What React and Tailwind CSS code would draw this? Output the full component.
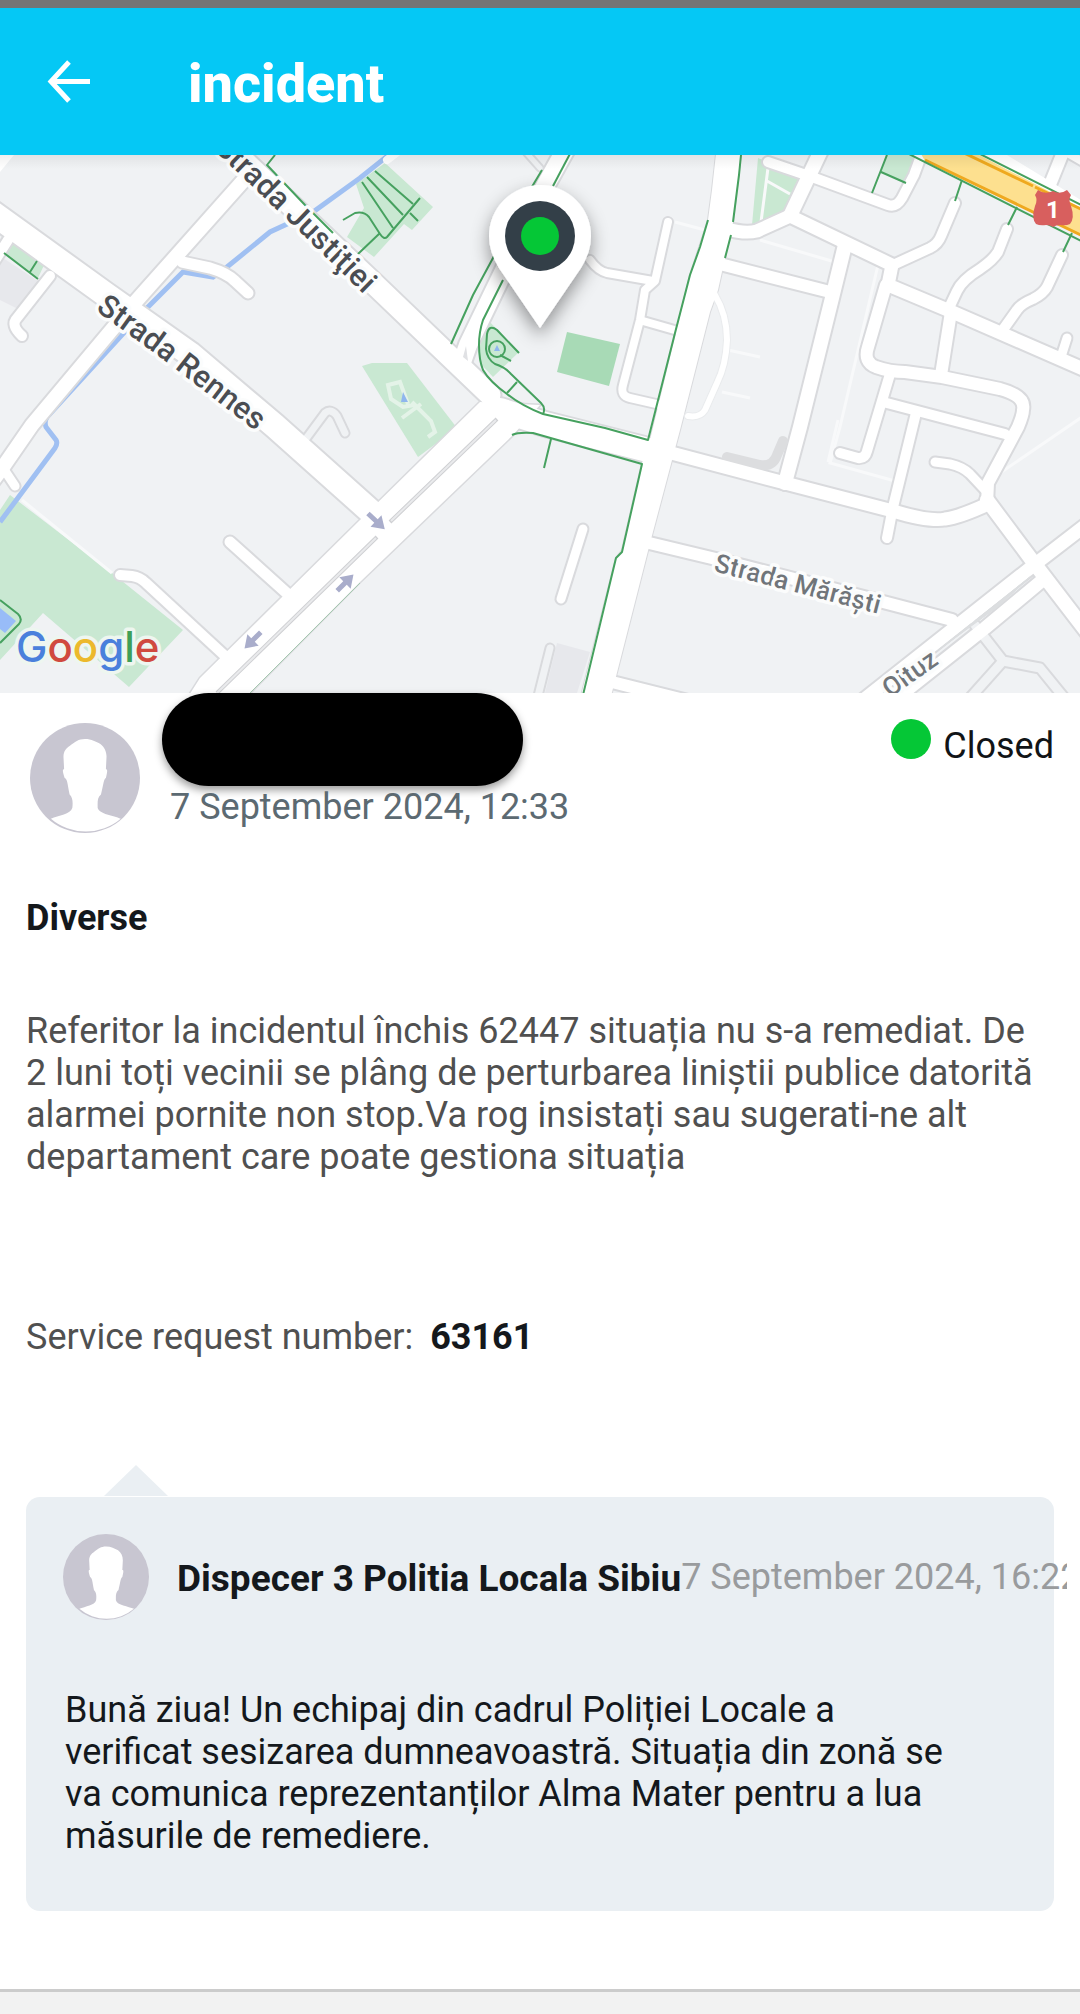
import React from "react";

// street geometry, in map units: [width, path]
const STREETS = [
  [24, "M-10 211L105 294L190 354L275 426L378 518"],
  [21, "M225 143L370 280L490 395"],
  [14, "M243 181L130 308L32 425L3 467L-8 482"],
  [9, "M3 468L15 486"],
  [11, "M182 262L210 268Q227 273 235 281L248 293"],
  [10, "M50 276L17 318Q10 325 22 336"],
  [10, "M8 240L-6 262"],
  [18, "M568 145L543 190L468 345L462 362"],
  [8, "M590 260Q598 271 607 273L653 281"],
  [8, "M668 222L655 281L645 290L640 320L623 385Q620 396 630 398L665 406"],
  [8, "M643 321L685 333"],
  [10, "M120 575L132 576Q140 577 146 583L224 655"],
  [11, "M230 542L290 596"],
  [9, "M583 529L561 599"],
  [24, "M500 410L545 424L660 453"],
  [13, "M660 450L785 483L893 511Q930 522 945 519Q960 517 988 504"],
  [12, "M645 542L720 560L887 603L952 620"],
  [12, "M612 682L700 704"],
  [13, "M862 701L1034 565L1095 518"],
  [13, "M898 697L985 628L1045 578"],
  [14, "M987 500L1034 563L1090 636"],
  [10, "M768 162L812 177L888 205Q896 208 902 198L914 175L925 145"],
  [14, "M826 140L790 216"],
  [13, "M727 229Q745 234 757 231L790 216L892 265L888 285L950 311L1090 372"],
  [10, "M955 203L941 236Q938 244 930 248L893 265"],
  [10, "M1007 229L998 252Q993 260 980 269Q962 280 957 291L949 308"],
  [10, "M1062 255L1047 287Q1043 294 1033 299Q1021 304 1017 310L1002 331"],
  [9, "M1067 338L1060 360"],
  [14, "M845 245L832 298L800 427L785 483"],
  [12, "M720 264L830 292"],
  [12, "M886 285L868 347Q863 362 876 367Q890 372 905 372L942 377L1000 389Q1026 396 1023 410Q1023 415 1018 427L988 483L987 504"],
  [12, "M951 312L941 375"],
  [10, "M890 374L867 451Q865 459 858 458L840 453"],
  [10, "M883 402L1005 434"],
  [10, "M916 413L893 507L887 538"],
  [9, "M935 462L950 464Q963 467 970 474L985 490"],
  [12, "M1066 145L1047 192"],
  [8, "M1066 152L1090 166"],
];

const ALLEYS = [
  [7, "M305 440L325 413Q331 408 337 416L345 433"],
  [7, "M550 648L537 700"],
  [9, "M975 625L1003 661L1040 668L1066 700"],
  [9, "M1003 661L970 698"],
  [5, "M524 150L540 168"],
];

const AVENUE = "M186 700L200 678L360 520L480 402L540 405L513 435L360 582L243 700Z";
const BOULEVARD =
  "M717 145L712 190L708 220L690 275L650 440L642 463L622 550L616 558L580 700L610 700L650 543L680 430L710 312L718 290L725 258L733 222L742 145Z";

const PARKS = [
  "M12 243L45 263L38 278L3 253Z",
  "M10 495L112 573L183 630L129 687L43 613L0 660V510Z",
  "M385 163L433 207L412 230L404 224L374 257L347 237L364 208L356 184Z",
  "M362 366L372 363H407L457 428L418 457Z",
  "M485 317L519 352L493 377L480 363L478 337Z",
  "M758 158L803 177L788 213L752 225Z",
  "M887 150H922L906 183L881 172Z",
];

const FOOTPATHS = [
  "M275 155L267 165L305 205L333 233",
  "M4 253L38 279M37 261L30 272",
  "M375 171L413 204M367 177L403 215M362 182L393 228M420 198L387 237Q384 240 380 234L369 217Q364 211 355 213L343 220M410 213L418 221M380 233L358 254",
  "M542 170L533 185L493 258L473 295L451 344",
  "M572 150L553 186",
  "M503 280L483 320Q479 332 479 345Q479 360 483 370Q490 382 507 394Q522 406 543 414L605 428L648 440L675 333L690 275L700 247L708 220",
  "M519 353L497 330Q489 324 487 334L486 349Q487 359 495 364Q505 367 511 374L541 403Q546 408 543 414M517 382L507 393M500 355L511 361",
  "M512 435Q518 432 533 433L642 464L622 552L616 558L583 695M551 439L544 468",
  "M741 155L739 175L733 222M731 235L725 258",
  "M907 153L1085 243M978 153L1085 207",
  "M962 180L955 201M1017 207L1008 225M1072 233L1063 252M887 155L872 193M881 172L906 183",
  "M0 600L18 614Q23 619 19 624L0 643",
];

const haloProps = {
  stroke: "#fbfcfc",
  strokeWidth: 7,
  strokeLinejoin: "round",
  paintOrder: "stroke",
};

const MapArrow = ({ x, y, angle }) => (
  <path
    d="M-11 -2.5H0V-8L12 0L0 8V2.5H-11Z"
    fill="#a9adcb"
    transform={`translate(${x} ${y}) rotate(${angle})`}
  />
);

const GoogleMark = () => (
  <text
    x="16"
    y="662"
    fontSize="42"
    fontFamily="Inter, sans-serif"
    fontWeight="500"
    strokeWidth="7"
    stroke="#eef6f0"
    strokeLinejoin="round"
    paintOrder="stroke"
  >
    <tspan fill="#4a80dc">G</tspan>
    <tspan fill="#d04a3f">o</tspan>
    <tspan fill="#ecb92c">o</tspan>
    <tspan fill="#4a80dc">g</tspan>
    <tspan fill="#3f9f58">l</tspan>
    <tspan fill="#d04a3f">e</tspan>
  </text>
);

const IncidentMap = () => (
  <svg
    viewBox="0 155 1080 538"
    className="block w-full h-auto"
    role="img"
    aria-label="Map"
    fontFamily="Roboto, sans-serif"
    fontWeight="500"
  >
    <defs>
      <path id="rennes" d="M95 310L160 357L275 446" />
      <path id="justitiei" d="M213 149L300 232L400 330" />
      <path id="marasti" d="M713 571L910 622" />
      <path id="oituz" d="M890 698L960 649" />
      <linearGradient id="barShadow" x1="0" y1="0" x2="0" y2="1">
        <stop offset="0" stopColor="#000" stopOpacity="0.06" />
        <stop offset="1" stopColor="#000" stopOpacity="0" />
      </linearGradient>
      <filter id="pinShadow" x="-50%" y="-30%" width="200%" height="170%">
        <feDropShadow dx="0" dy="8" stdDeviation="9" floodOpacity="0.4" />
      </filter>
    </defs>

    <rect y="155" width="1080" height="538" fill="#f0f2f4" />
    <path d="M0 256L38 281L20 310L0 300ZM557 643L590 652L577 693H545Z" fill="#e7e8ec" />
    {PARKS.map((d) => (
      <path key={d} d={d} fill="#c9e8d2" />
    ))}
    <path d="M567 332L620 344L609 386L557 372Z" fill="#a8dab6" />
    <path d="M0 608L16 621L5 633L0 629Z" fill="#98bcf8" />

    {/* faint lanes */}
    <g fill="none" stroke="#f8f9fa" strokeWidth="3">
      <path d="M878 265L840 427L830 463L895 481M760 240L835 262M675 222L705 230M768 168L761 222M767 181L790 194" />
      <path d="M1085 415L1000 473M728 350L760 357M722 392L750 398M22 500L112 573M838 420L828 462" />
      <path
        d="M408 404L400 382L388 385L391 399L403 407L414 405M402 418L421 404M412 402L431 421L435 432L428 437"
        stroke="#e4f3e8"
        strokeWidth="4"
      />
    </g>

    <path
      d="M395 150L360 178L313 212L270 232L227 267L213 277L183 272L142 313L120 337L47 417Q44 422 46 427L56 440Q58 443 55 448L0 522"
      fill="none"
      stroke="#a0c0f2"
      strokeWidth="5"
    />

    {/* casings first, so that crossings stay open */}
    <g fill="none" stroke="#d9dadd" strokeLinecap="round" strokeLinejoin="round">
      {[...ALLEYS, ...STREETS].map(([w, d]) => (
        <path key={d} d={d} strokeWidth={w + 4} />
      ))}
      <path d={AVENUE} strokeWidth="3" />
      <path d={BOULEVARD} strokeWidth="2" />
      <path d="M715 295Q727 315 727 340Q726 365 717 383L705 410Q700 418 688 416" strokeWidth="8" stroke="#e9ebed" />
    </g>
    <g fill="none" stroke="#fff" strokeLinecap="round" strokeLinejoin="round">
      {ALLEYS.map(([w, d]) => (
        <path key={d} d={d} strokeWidth={w} stroke="#f0f2f4" />
      ))}
      <path d="M727 457L760 465Q773 467 777 455L783 441" stroke="#dcdddf" strokeWidth="10" />
      {STREETS.map(([w, d]) => (
        <path key={d} d={d} strokeWidth={w} />
      ))}
      <path d="M715 295Q727 315 727 340Q726 365 717 383L705 410Q700 418 688 416" strokeWidth="6" />
      <path d="M387 160L400 150" strokeWidth="8" />
    </g>
    <path d={AVENUE} fill="#fff" />
    <path d={BOULEVARD} fill="#fff" />
    <path d="M0 150H18L0 172Z" fill="#fff" />
    <path d="M217 693L377 537M390 522L497 419" fill="none" stroke="#cfd0d3" strokeWidth="4" />
    <path d="M217 693L376 538M391 521L496 420" fill="none" stroke="#e9eaec" strokeWidth="2" />
    <path d="M250 693L360 583" fill="none" stroke="#a5c9b0" strokeWidth="1" />
    <path d="M463 357L466 346L468 361Z" fill="#e0e1e4" />
    <path d="M937 651L1000 605L1031 576L1001 600Z" fill="#dcdee0" stroke="#dcdee0" strokeWidth="1" />

    {/* national road */}
    <path d="M900 140L1090 231V215L975 145Z" fill="none" stroke="#fff" strokeWidth="16" />
    <path d="M916 145L925 161L1085 238V210L960 145Z" fill="#fde08f" />
    <path d="M925 160L1085 237M960 151L1033 186M1035 187L1085 211" fill="none" stroke="#efa91f" strokeWidth="3" />

    <g fill="none" stroke="#46a15f" strokeWidth="2" strokeLinejoin="round">
      {FOOTPATHS.map((d) => (
        <path key={d} d={d} />
      ))}
      <circle cx="497" cy="349" r="8" />
    </g>
    <path d="M497 345L500 351H494ZM403 392L408 402H401Z" fill="#8fb6ee" />

    <MapArrow x={253} y={640} angle={135} />
    <MapArrow x={345} y={583} angle={-45} />
    <MapArrow x={376} y={521} angle={43} />

    <g fill="#4a4d52" fontSize="31" {...haloProps}>
      <text>
        <textPath href="#rennes">Strada Rennes</textPath>
      </text>
      <text>
        <textPath href="#justitiei">Strada Justiţiei</textPath>
      </text>
    </g>
    <g fill="#70757a" fontSize="26" {...haloProps}>
      <text>
        <textPath href="#marasti">Strada Mărăști</textPath>
      </text>
      <text>
        <textPath href="#oituz">Oituz</textPath>
      </text>
    </g>

    <path
      d="M1038 190Q1045 195 1053 191Q1060 195 1067 190L1071 195Q1068 200 1071 206Q1075 218 1070 224Q1066 226 1060 225Q1056 225 1053 227Q1050 225 1046 225Q1040 226 1036 224Q1031 218 1035 206Q1038 200 1035 195Z"
      fill="#d85f5e"
    />
    <text x="1053" y="218" fontSize="24" fontWeight="700" fill="#fff" textAnchor="middle">
      1
    </text>

    <GoogleMark />
    <rect y="155" width="1080" height="14" fill="url(#barShadow)" />

    <path
      d="M540 328L499 268Q489 252 489 236A51 51 0 0 1 591 236Q591 252 581 268Z"
      fill="#fff"
      filter="url(#pinShadow)"
    />
    <circle cx="540" cy="236" r="35" fill="#333f48" />
    <circle cx="540" cy="236" r="19" fill="#05c736" />
  </svg>
);

const Avatar = ({ className }) => (
  <svg viewBox="0 0 100 100" className={className} aria-hidden="true">
    <circle cx="50" cy="50" r="50" fill="#c8c6d1" />
    <path
      d="M50 14.500C56 14.500 60 17 64 19C68 22 70 27 69.500 32L69 42C71 42 70 45 69 50C67 51 67 55 64.500 65C61 68 61.500 72 61.500 77C63 83 76 84 82.500 87A49 49 0 0 1 19 87C26 84 37 83 38.500 77C39 72 39 68 36 65C34 55 34 51 31.500 50C30 45 29 42 31 42L30.500 32C30 26 33 23 36 21C41 17 44 14.500 50 14.500Z"
      fill="#fff"
    />
  </svg>
);

const Header = ({ title }) => (
  <header className="flex items-center h-[147px] pl-11 bg-[#05c8f5] text-white">
    <button type="button" aria-label="Back" className="flex items-center justify-center w-12 h-12">
      <svg viewBox="0 0 48 48" className="w-12 h-12" fill="none" stroke="currentColor" strokeWidth="5">
        <path d="M25 4L7 23.500L25 43M6 23.500H46" />
      </svg>
    </button>
    <h1 className="ml-24 pt-1 text-[54px] leading-[64px] font-extrabold">{title}</h1>
  </header>
);

const Reply = ({ author, date, text }) => (
  <section className="mt-[107px]">
    <div className="ml-[78px] mb-px w-16 h-[31px] bg-[#eaeff3] [clip-path:polygon(50%_0,100%_100%,0_100%)]" />
    <article className="pt-[37px] pb-[54px] rounded-[14px] bg-[#eaeff3] text-[#14181c]">
      {/* the date runs past the card edge before it is cut off */}
      <div className="flex items-center -mr-[13px] pl-[37px] overflow-hidden whitespace-nowrap">
        <Avatar className="w-[86px] h-[86px] shrink-0" />
        <h2 className="ml-7 pt-1 shrink-0 text-[37px] font-bold">{author}</h2>
        <time className="shrink-0 text-[#999b9d]">{date}</time>
      </div>
      <p className="mt-[69px] pl-[39px] pr-24">{text}</p>
    </article>
  </section>
);

export default function App() {
  return (
    <div className="min-h-screen bg-white font-[Roboto,sans-serif] text-[36px] leading-[42px] overflow-x-hidden">
      <div className="h-2 bg-[#757575]" />
      <Header title="incident" />
      <IncidentMap />

      <main className="px-[26px]">
        <div className="flex items-start">
          <Avatar className="w-[110px] h-[110px] mt-[30px] ml-1 shrink-0" />
          <div className="ml-[22px]">
            <div className="w-[361px] h-[93px] rounded-full bg-black shadow-[0_4px_8px_rgba(0,0,0,0.4)]" />
            <time className="block pl-2 text-[#5c6a72]">7 September 2024, 12:33</time>
          </div>
          <div className="flex items-start ml-auto mt-[26px] gap-3 text-[#111417]">
            <span className="w-10 h-10 rounded-full bg-[#05c736]" />
            <span className="mt-1.5">Closed</span>
          </div>
        </div>

        <h2 className="mt-16 font-bold text-[#14181c]">Diverse</h2>

        <p className="mt-[71px] pr-3 text-[#505050]">
          Referitor la incidentul închis 62447 situația nu s-a remediat. De 2 luni toți vecinii se
          plâng de perturbarea liniștii publice datorită alarmei pornite non stop.Va rog insistați
          sau sugerati-ne alt departament care poate gestiona situația
        </p>

        <p className="mt-[138px] text-[#505050]">
          Service request number: <strong className="ml-2 font-bold text-[#14181c]">63161</strong>
        </p>

        <Reply
          author="Dispecer 3 Politia Locala Sibiu"
          date="7 September 2024, 16:22"
          text="Bună ziua! Un echipaj din cadrul Poliției Locale a verificat sesizarea dumneavoastră. Situația din zonă se va comunica reprezentanților Alma Mater pentru a lua măsurile de remediere."
        />
      </main>

      <footer className="mt-[78px] h-[25px] border-t-[3px] border-[#cccccc] bg-[#f2f2f2]" />
    </div>
  );
}
